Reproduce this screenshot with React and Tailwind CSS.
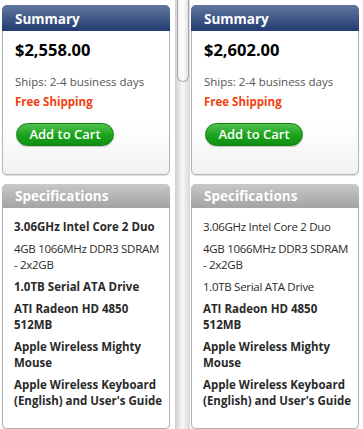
import React from "react";

const products = [
  {
    price: "$2,558.00",
    specs: [
      { lines: ["3.06GHz Intel Core 2 Duo"], bold: true },
      { lines: ["4GB 1066MHz DDR3 SDRAM", "- 2x2GB"], bold: false },
      { lines: ["1.0TB Serial ATA Drive"], bold: true },
      { lines: ["ATI Radeon HD 4850", "512MB"], bold: true },
      { lines: ["Apple Wireless Mighty", "Mouse"], bold: true },
      { lines: ["Apple Wireless Keyboard", "(English) and User's Guide"], bold: true },
    ],
  },
  {
    price: "$2,602.00",
    specs: [
      { lines: ["3.06GHz Intel Core 2 Duo"], bold: false },
      { lines: ["4GB 1066MHz DDR3 SDRAM", "- 2x2GB"], bold: false },
      { lines: ["1.0TB Serial ATA Drive"], bold: false },
      { lines: ["ATI Radeon HD 4850", "512MB"], bold: true },
      { lines: ["Apple Wireless Mighty", "Mouse"], bold: true },
      { lines: ["Apple Wireless Keyboard", "(English) and User's Guide"], bold: true },
    ],
  },
];

const ProductColumn = ({ product }) => (
  <div className="flex flex-col w-[168px]">
    {/* summary */}
    <div className="mt-[5px] h-[170px] flex flex-col rounded-[5px] border border-[#b4b4b4] shadow-[0_1px_1px_rgba(0,0,0,0.15)] bg-gradient-to-b from-white from-70% to-[#f1f1f1]">
      <div className="h-[26px] -mx-px -mt-px rounded-t-[5px] bg-gradient-to-b from-[#6278a0] to-[#213b70] px-[13px] pt-[5px] text-[13.5px] font-bold text-white leading-[18px]">
        Summary
      </div>
      <div className="px-[12px] pt-[8px]">
        <div className="text-[16.5px] font-bold text-black leading-[22px]">{product.price}</div>
        <div className="mt-[13px] text-[11.5px] text-[#555] leading-[16px]">Ships: 2-4 business days</div>
        <div className="mt-[4px] text-[11.5px] font-bold text-[#f2400f] leading-[16px]">Free Shipping</div>
        <button className="mt-[13px] ml-px h-[23px] w-[98px] rounded-full bg-gradient-to-b from-[#4fc04f] via-[#1ca51c] to-[#0f8f14] border border-[#0f8412] text-[13px] font-semibold text-white leading-none shadow-[0_1px_1px_rgba(0,0,0,0.2)]">
          Add to Cart
        </button>
      </div>
    </div>
    {/* specifications */}
    <div className="mt-[9px] h-[245px] flex flex-col rounded-[5px] border border-[#b4b4b4] shadow-[0_1px_1px_rgba(0,0,0,0.15)] bg-white">
      <div className="h-[24px] -mx-px -mt-px rounded-t-[5px] bg-gradient-to-b from-[#c8c8c8] to-[#a3a3a3] px-[13px] pt-[3px] text-[13.5px] font-bold text-white leading-[18px]">
        Specifications
      </div>
      <ul className="px-[11px] pt-[11px] flex flex-col gap-[6px]">
        {product.specs.map((s) => (
          <li
            key={s.lines[0]}
            className={`text-[11.5px] leading-[16px] text-[#2a2a2a] whitespace-nowrap ${s.bold ? "font-bold" : "font-normal tracking-[-0.3px]"}`}
          >
            {s.lines.map((l) => (
              <div key={l}>{l}</div>
            ))}
          </li>
        ))}
      </ul>
    </div>
  </div>
);

const App = () => {
  return (
    <div className="w-[363px] h-[429px] overflow-hidden bg-white flex pl-[2px] font-['Open_Sans',sans-serif]">
      <ProductColumn product={products[0]} />
      <div className="w-[21px] flex">
        <div className="ml-[5px] w-[15px] h-full bg-gradient-to-r from-[#cfcfcf] via-[#f7f7f7] to-[#d8d8d8] flex justify-center">
          <div className="w-[12px] h-[82px] rounded-b-[6px] border border-t-0 border-[#a8a8a8] bg-gradient-to-r from-[#f0f0f0] via-white to-[#e2e2e2]" />
        </div>
      </div>
      <ProductColumn product={products[1]} />
    </div>
  );
};

export default App;
